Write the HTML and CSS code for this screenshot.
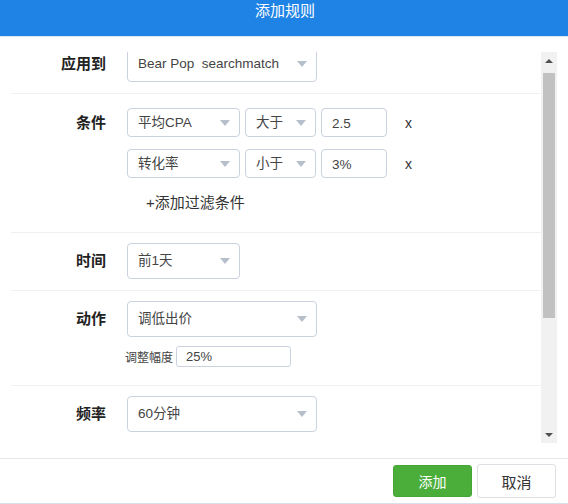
FILE: index.html
```html
<!DOCTYPE html>
<html lang="zh-CN">
<head>
<meta charset="utf-8">
<title>添加规则</title>
<link rel="stylesheet" href="styles.css">
</head>
<body>
<div class="dialog">
  <header class="dlg-head">添加规则</header>
  <div class="dlg-body">
    <div class="scroller">
      <div class="rows">
        <div class="row row-apply">
          <div class="label h36">应用到</div>
          <div class="field">
            <div class="select w190 h36"><span>Bear Pop&nbsp; searchmatch</span><i class="caret"></i></div>
          </div>
        </div>
        <div class="row row-cond">
          <div class="label h29">条件</div>
          <div class="field">
            <div class="cond-line">
              <div class="select w113 h29"><span>平均CPA</span><i class="caret"></i></div>
              <div class="select w71 h29"><span>大于</span><i class="caret"></i></div>
              <div class="input w66 h29">2.5</div>
              <span class="remove">x</span>
            </div>
            <div class="cond-line">
              <div class="select w113 h29"><span>转化率</span><i class="caret"></i></div>
              <div class="select w71 h29"><span>小于</span><i class="caret"></i></div>
              <div class="input w66 h29">3%</div>
              <span class="remove">x</span>
            </div>
            <div class="add-filter">+添加过滤条件</div>
          </div>
        </div>
        <div class="row">
          <div class="label h36">时间</div>
          <div class="field">
            <div class="select w113 h36"><span>前1天</span><i class="caret"></i></div>
          </div>
        </div>
        <div class="row row-action">
          <div class="label h36">动作</div>
          <div class="field">
            <div class="select w190 h36"><span>调低出价</span><i class="caret"></i></div>
            <div class="adjust">
              <span class="adjust-label">调整幅度</span>
              <div class="input small">25%</div>
            </div>
          </div>
        </div>
        <div class="row">
          <div class="label h36">频率</div>
          <div class="field">
            <div class="select w190 h36"><span>60分钟</span><i class="caret"></i></div>
          </div>
        </div>
      </div>
    </div>
    <div class="scrollbar">
      <div class="sb-btn"><i class="sb-up"></i></div>
      <div class="sb-track"><div class="sb-thumb"></div></div>
      <div class="sb-btn"><i class="sb-down"></i></div>
    </div>
  </div>
  <footer class="dlg-foot">
    <button class="btn btn-ok">添加</button>
    <button class="btn btn-cancel">取消</button>
  </footer>
</div>
</body>
</html>
```
FILE: styles.css
```css
* { box-sizing: border-box; }
html, body { margin: 0; padding: 0; background: #fff; }
body {
  font-family: "Liberation Sans", "Noto Sans CJK SC", Arial, sans-serif;
  color: #333;
}
.dialog {
  width: 568px;
  height: 504px;
  display: flex;
  flex-direction: column;
  overflow: hidden;
}
.dlg-head {
  height: 37px;
  background: #1f83e6;
  border-bottom: 1px solid #dce7f2;
  color: #fff;
  font-size: 15px;
  line-height: 21px;
  text-align: center;
  padding-left: 2px;
}
.dlg-body {
  height: 421px;
  padding: 15px 11px;
  display: flex;
}
.scroller {
  flex: 1;
  overflow: hidden;
}
.rows { margin-top: -17px; }
.row {
  display: flex;
  gap: 21px;
  padding: 10px 0 11px;
  border-bottom: 1px solid #eef0f3;
}
.row-apply { padding-top: 11px; }
.row-cond { padding-top: 14px; padding-bottom: 18px; }
.row-action { padding-bottom: 18px; }
.label {
  width: 95px;
  flex: none;
  text-align: right;
  font-weight: bold;
  font-size: 15px;
  color: #222;
}
.h36 { height: 36px; line-height: 36px; }
.h29 { height: 29px; line-height: 29px; }
.label.h36 { line-height: 35px; }
.field { display: flex; flex-direction: column; }
.select, .input {
  border: 1px solid #c9d2de;
  border-radius: 4px;
  background: #fff;
  font-size: 13.5px;
  color: #444;
}
.select {
  display: flex;
  align-items: center;
  justify-content: space-between;
  padding: 0 9px 0 10px;
}
.input { padding: 0 10px; }
.w190 { width: 190px; }
.w113 { width: 113px; }
.w71 { width: 71px; }
.w66 { width: 66px; }
.caret {
  width: 0;
  height: 0;
  border-left: 5px solid transparent;
  border-right: 5px solid transparent;
  border-top: 6px solid #b6bfcb;
}
.cond-line {
  display: flex;
  align-items: center;
  gap: 5px;
  margin-bottom: 12px;
}
.cond-line + .cond-line { margin-bottom: 0; }
.remove {
  margin-left: 13px;
  font-size: 14px;
  color: #333;
}
.add-filter {
  margin: 14px 0 0 19px;
  font-size: 15px;
  line-height: 22px;
  color: #333;
}
.adjust {
  display: flex;
  align-items: center;
  gap: 3px;
  margin: 9px 0 0 -2px;
}
.adjust-label { font-size: 12px; color: #444; }
.input.small {
  width: 115px;
  height: 21px;
  line-height: 19px;
  font-size: 13px;
  padding: 0 9px;
  border-radius: 3px;
}
.scrollbar {
  width: 16px;
  flex: none;
  background: #f1f1f1;
  display: flex;
  flex-direction: column;
}
.sb-btn {
  height: 17px;
  display: flex;
  align-items: center;
  justify-content: center;
}
.sb-up, .sb-down {
  width: 0;
  height: 0;
  border-left: 4px solid transparent;
  border-right: 4px solid transparent;
}
.sb-up { border-bottom: 4px solid #505050; }
.sb-down { border-top: 4px solid #505050; }
.sb-track { flex: 1; padding: 4px 2px 0; }
.sb-thumb { height: 245px; background: #c1c1c1; }
.dlg-foot {
  flex: 1;
  border-top: 1px solid #e4e7eb;
  border-bottom: 1px solid #d8e0e9;
  display: flex;
  justify-content: flex-end;
  align-items: center;
  gap: 5px;
  padding: 0 12px 0 0;
}
.btn {
  font-family: "Liberation Sans", "Noto Sans CJK SC", Arial, sans-serif;
  width: 79px;
  border-radius: 3px;
  cursor: pointer;
  padding: 0;
}
.btn-ok {
  height: 32px;
  background: #4bae3b;
  border: 1px solid #45a636;
  color: #fff;
  font-size: 14px;
}
.btn-cancel {
  height: 34px;
  background: #fff;
  border: 1px solid #dcdfe3;
  color: #333;
  font-size: 15px;
}
```
